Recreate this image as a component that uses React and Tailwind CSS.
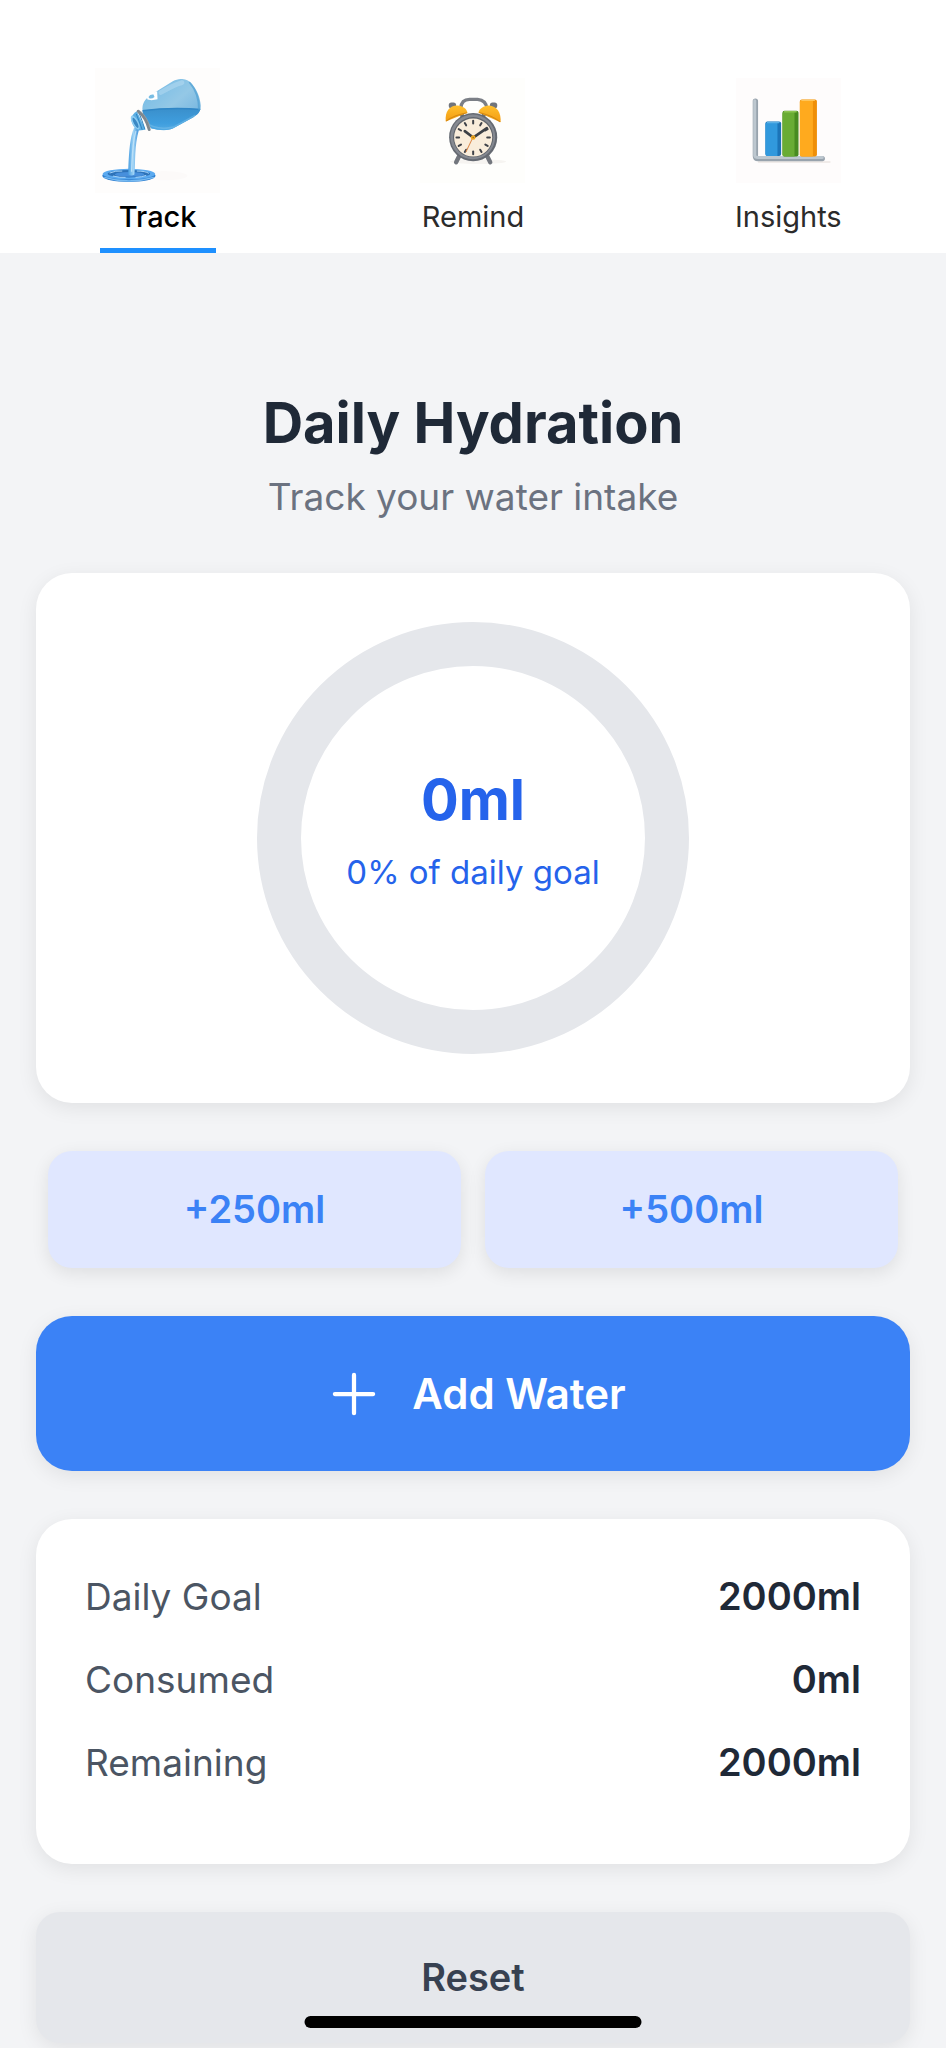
import React, { useState } from "react";

const GOAL = 2000;

function BottleIcon() {
  return (
    <svg viewBox="42 54 376 376" className="size-[125px]" aria-hidden="true">
      <defs>
        <linearGradient id="glass" x1="0" y1="0" x2="1" y2="1">
          <stop offset="0" stopColor="#6cb8e6" />
          <stop offset="0.5" stopColor="#94c8e6" />
          <stop offset="1" stopColor="#5fa9dc" />
        </linearGradient>
        <linearGradient id="fill" x1="0" y1="0" x2="0" y2="1">
          <stop offset="0" stopColor="#3a8fcb" />
          <stop offset="0.6" stopColor="#3f9ede" />
          <stop offset="1" stopColor="#58aee6" />
        </linearGradient>
        <linearGradient id="stream" x1="0" y1="0" x2="1" y2="0">
          <stop offset="0" stopColor="#4a9fe2" />
          <stop offset="0.5" stopColor="#9fd3f5" />
          <stop offset="1" stopColor="#3c8fd9" />
        </linearGradient>
        <clipPath id="bottle">
          <path d="M184 176C186 156 196 144 212 134L276 94C298 82 322 86 334 102C350 122 358 142 360 166C361 184 352 194 338 202L276 236C256 245 230 240 212 236C196 222 186 200 184 176Z" />
        </clipPath>
      </defs>
      <rect x="42" y="54" width="376" height="376" fill="#fefdfc" />
      <ellipse cx="250" cy="378" rx="70" ry="14" fill="#fcfaf9" />
      <ellipse cx="144" cy="378" rx="80" ry="19" fill="#2f7fd0" />
      <ellipse cx="144" cy="373" rx="79" ry="16" fill="#5baaf0" />
      <ellipse cx="144" cy="372" rx="64" ry="11" fill="#2d72b8" />
      <ellipse cx="146" cy="374" rx="44" ry="7" fill="#478fdc" />
      <path d="M86 370Q104 362 124 364M168 364Q194 364 204 371M96 379Q116 384 134 383M164 383Q184 382 196 377" fill="none" stroke="#a4d2f8" strokeWidth="3" />
      <path d="M70 383Q144 405 219 383" fill="none" stroke="#78bbf2" strokeWidth="4" />
      <path d="M160 232C148 262 144 298 142 374Q151 380 161 374C164 332 160 292 174 240Z" fill="url(#stream)" />
      <path d="M165 244C154 280 154 320 152 366" fill="none" stroke="#c5e6fa" strokeWidth="4" opacity=".8" />
      <path d="M168 184L194 240L174 242C162 238 152 222 151 208C152 198 158 190 168 184Z" fill="#5baee3" />
      <ellipse cx="163" cy="218" rx="9" ry="23" transform="rotate(-28 163 218)" fill="#8fcdf2" />
      <ellipse cx="164" cy="219" rx="5" ry="17" transform="rotate(-28 164 219)" fill="#3a88c4" />
      <path d="M166 192Q176 216 184 240M174 188Q184 212 192 238" fill="none" stroke="#2f84c1" strokeWidth="3" />
      <g clipPath="url(#bottle)">
        <rect x="180" y="80" width="190" height="170" fill="url(#glass)" />
        <path d="M180 182Q270 170 362 178V250H180Z" fill="url(#fill)" />
        <path d="M180 183Q270 171 362 179" fill="none" stroke="#2f86c6" strokeWidth="4" />
        <path d="M240 128Q280 104 304 98" fill="none" stroke="#bfe1f4" strokeWidth="14" strokeLinecap="round" opacity=".45" />
        <path d="M326 96Q356 132 355 180" fill="none" stroke="#4f9fd3" strokeWidth="6" opacity=".7" />
        <path d="M188 214Q226 244 278 232L344 196" fill="none" stroke="#79bfe9" strokeWidth="5" opacity=".5" />
      </g>
      <path d="M172 184Q196 202 205 239" fill="none" stroke="#7e878e" strokeWidth="9" strokeLinecap="round" />
      <path d="M178 183Q200 202 208 234" fill="none" stroke="#a2a5a6" strokeWidth="2" />
      <path d="M198 142L212 130L229 124L230 148L212 151L200 149Z" fill="#fff" />
      <path d="M203 141Q208 132 218 134L221 141Q213 148 205 145Z" fill="#79bde3" />
    </svg>
  );
}

function ClockIcon() {
  const ticks = [0, 30, 60, 90, 120, 150, 180, 210, 240, 270, 300, 330];
  return (
    <svg viewBox="60 58 314 314" className="size-[105px]" aria-hidden="true">
      <defs>
        <linearGradient id="bell" x1="0" y1="0" x2="0" y2="1">
          <stop offset="0" stopColor="#ffc02e" />
          <stop offset="1" stopColor="#f39c12" />
        </linearGradient>
      </defs>
      <rect x="60" y="58" width="314" height="314" fill="#fefefc" />
      <ellipse cx="234" cy="308" rx="84" ry="7" fill="#f6f4f1" />
      <path d="M182 148Q184 122 208 122H232Q258 124 260 150" fill="none" stroke="#7b7f86" strokeWidth="10" />
      <path d="M178 290L168 310M260 290L270 310" stroke="#72767d" strokeWidth="13" strokeLinecap="round" />
      <path d="M184 166L192 184M252 166L244 184" stroke="#666a70" strokeWidth="12" />
      <rect x="146" y="131" width="22" height="18" rx="8" fill="#71757c" />
      <rect x="269" y="131" width="22" height="18" rx="8" fill="#71757c" />
      <path d="M137 188C134 158 148 140 172 140C188 141 200 150 202 162Z" fill="url(#bell)" />
      <path d="M301 190C303 160 290 142 266 140C250 141 237 149 235 161Z" fill="url(#bell)" />
      <path d="M138 187Q162 169 201 162M300 189Q276 170 236 161" fill="none" stroke="#d48812" strokeWidth="3" />
      <circle cx="219" cy="235" r="72" fill="#656a72" />
      <circle cx="218" cy="234" r="67" fill="#858991" />
      <circle cx="219" cy="235" r="60" fill="#5f646b" />
      <circle cx="219" cy="236" r="57" fill="#f9eddb" />
      {ticks.map((a) => (
        <path key={a} d="M219 186V194" stroke="#3f4248" strokeWidth="6" strokeLinecap="round" transform={`rotate(${a} 219 236)`} />
      ))}
      <path d="M217 238L198 278" stroke="#dd8c50" strokeWidth="3" strokeLinecap="round" />
      <path d="M219 236L194 217M219 236L260 208" stroke="#3c4046" strokeWidth="8" strokeLinecap="round" />
      <circle cx="219" cy="236" r="7" fill="#f2a71b" />
      <circle cx="219" cy="236" r="2" fill="#8c6522" />
    </svg>
  );
}

function ChartIcon() {
  return (
    <svg viewBox="62 58 314 314" className="size-[105px]" aria-hidden="true">
      <rect x="62" y="58" width="314" height="314" fill="#fefcfc" />
      <path d="M130 309H342" stroke="#f0ebe9" strokeWidth="6" strokeLinecap="round" />
      <path d="M120 127V291Q120 299 128 299H320" fill="none" stroke="#98a3ad" strokeWidth="16" strokeLinecap="round" />
      <path d="M118 126V290Q119 296 128 296H320" fill="none" stroke="#bdc7cf" strokeWidth="9" strokeLinecap="round" />
      <rect x="150" y="188" width="47" height="103" rx="6" fill="#1c74b8" />
      <path d="M150 197Q150 191 156 191H186V291H156Q150 291 150 285Z" fill="#3199dd" />
      <path d="M156 191H190" stroke="#5bb1e6" strokeWidth="4" strokeLinecap="round" />
      <rect x="201" y="156" width="48" height="137" rx="6" fill="#488b20" />
      <path d="M201 165Q201 159 207 159H237V293H207Q201 293 201 287Z" fill="#69ac34" />
      <path d="M207 159H242" stroke="#8cc450" strokeWidth="4" strokeLinecap="round" />
      <rect x="253" y="122" width="51" height="171" rx="6" fill="#ef8f08" />
      <path d="M253 131Q253 125 259 125H292V293H259Q253 293 253 287Z" fill="#ffaa1e" />
      <path d="M259 125H296" stroke="#ffc65a" strokeWidth="4" strokeLinecap="round" />
    </svg>
  );
}

function Tab({ href, label, icon, active }) {
  return (
    <a
      href={href}
      aria-current={active ? "page" : undefined}
      className={
        active
          ? "flex flex-1 flex-col items-center font-medium text-black"
          : "flex flex-1 flex-col items-center text-[#2b2b2b]"
      }
    >
      <span className="flex h-[125px] items-center">{icon}</span>
      <span className="mt-1.5 text-[29px] leading-9">{label}</span>
      <span className={active ? "mt-[13px] h-[5px] w-[116px] bg-[#1e90ff]" : "mt-[13px] h-[5px] w-[116px]"} />
    </a>
  );
}

function ProgressRing({ amount }) {
  const percent = Math.min(100, Math.round((amount / GOAL) * 100));
  return (
    <div className="grid place-items-center">
      <svg viewBox="0 0 432 432" className="col-start-1 row-start-1 size-[432px] -rotate-90" aria-hidden="true">
        <circle cx="216" cy="216" r="194" fill="none" stroke="#e5e7eb" strokeWidth="44" />
        {percent > 0 && (
          <circle
            cx="216"
            cy="216"
            r="194"
            fill="none"
            stroke="#2563eb"
            strokeWidth="44"
            pathLength="100"
            strokeDasharray={`${percent} 100`}
          />
        )}
      </svg>
      <div className="col-start-1 row-start-1 flex flex-col items-center gap-4 pb-4 text-[#2563eb]">
        <p className="text-[56px] leading-[68px] font-bold">{amount}ml</p>
        <p className="text-[33px] leading-[44px]">{percent}% of daily goal</p>
      </div>
    </div>
  );
}

function StatRow({ label, value }) {
  return (
    <div className="mb-6 flex justify-between leading-[59px]">
      <dt className="text-[37px] text-[#4b5563]">{label}</dt>
      <dd className="text-[38px] font-semibold text-[#1f2937]">{value}ml</dd>
    </div>
  );
}

function QuickAdd({ amount, onAdd }) {
  return (
    <button
      type="button"
      onClick={() => onAdd(amount)}
      className="h-[117px] flex-1 rounded-3xl bg-[#e0e7ff] text-[38px] font-semibold text-[#3b82f6] shadow-[0_5px_18px_rgba(0,0,0,0.09)]"
    >
      +{amount}ml
    </button>
  );
}

export default function App() {
  const [consumed, setConsumed] = useState(0);
  const add = (amount) => setConsumed((c) => c + amount);

  return (
    <div className="min-h-screen bg-[#f3f4f6] font-['Inter',sans-serif]">
      <nav className="flex bg-white pt-[68px]">
        <Tab href="#track" label="Track" icon={<BottleIcon />} active />
        <Tab href="#remind" label="Remind" icon={<ClockIcon />} />
        <Tab href="#insights" label="Insights" icon={<ChartIcon />} />
      </nav>

      <main className="flex flex-col gap-12 px-9 pt-[136px]">
        <header className="flex flex-col items-center gap-4 pb-1 text-center">
          <h1 className="text-[56px] leading-[68px] font-bold text-[#1f2937]">Daily Hydration</h1>
          <p className="text-[37px] leading-[48px] text-[#6b7280]">Track your water intake</p>
        </header>

        <section className="rounded-[36px] bg-white py-[49px] shadow-[0_5px_20px_rgba(0,0,0,0.08)]">
          <ProgressRing amount={consumed} />
        </section>

        <div className="flex gap-6 px-3">
          <QuickAdd amount={250} onAdd={add} />
          <QuickAdd amount={500} onAdd={add} />
        </div>

        <button
          type="button"
          onClick={() => add(250)}
          className="flex h-[155px] items-center justify-center gap-6 rounded-[36px] bg-[#3b82f6] text-[42px] font-semibold text-white shadow-[0_5px_20px_rgba(0,0,0,0.08)]"
        >
          <svg viewBox="0 0 512 512" className="size-[68px]" aria-hidden="true">
            <path d="M256 112V400M400 256H112" fill="none" stroke="currentColor" strokeWidth="32" strokeLinecap="round" />
          </svg>
          Add Water
        </button>

        <dl className="rounded-[36px] bg-white px-[49px] py-12 shadow-[0_5px_20px_rgba(0,0,0,0.08)]">
          <StatRow label="Daily Goal" value={GOAL} />
          <StatRow label="Consumed" value={consumed} />
          <StatRow label="Remaining" value={Math.max(0, GOAL - consumed)} />
        </dl>

        <button
          type="button"
          onClick={() => setConsumed(0)}
          className="h-[131px] rounded-3xl bg-[#e5e7eb] text-[38px] font-semibold text-[#374151] shadow-[0_5px_20px_rgba(0,0,0,0.08)]"
        >
          Reset
        </button>
      </main>

      <div className="fixed bottom-5 left-1/2 h-3 w-[337px] -translate-x-1/2 rounded-full bg-black" />
    </div>
  );
}
